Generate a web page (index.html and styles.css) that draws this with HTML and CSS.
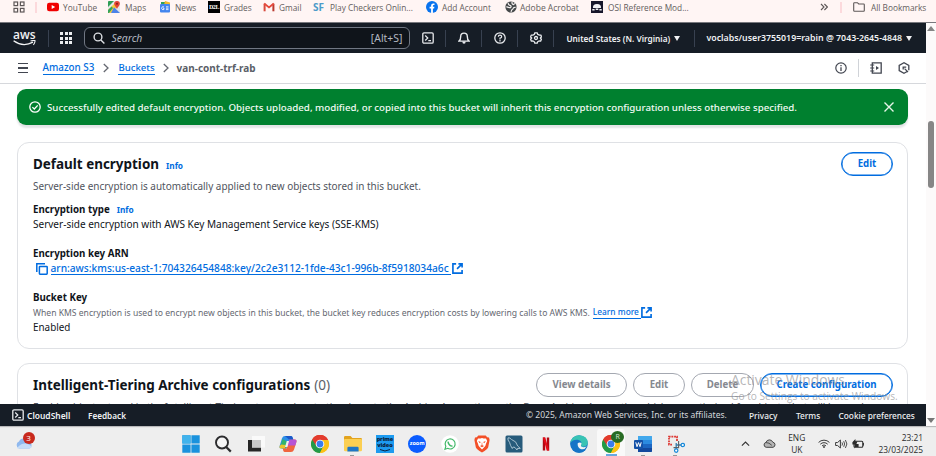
FILE: index.html
```html
<!DOCTYPE html>
<html lang="en">
<head>
<meta charset="utf-8">
<title>Amazon S3</title>
<link rel="stylesheet" href="styles.css">
</head>
<body>
<svg width="0" height="0" class="defs">
  <symbol id="chrome" viewBox="0 0 18 18">
    <circle cx="9" cy="9" r="9" fill="#fbc116"/>
    <path d="M9 9 1.2 4.5A9 9 0 0 1 16.8 4.5Z" fill="#e33b2e"/>
    <path d="M9 9 1.2 4.5A9 9 0 0 0 9 18L12.6 11Z" fill="#229a48"/>
    <path d="M9 5H17.1A9 9 0 0 1 9 18L12.6 11Z" fill="#fbc116"/>
    <path d="M9 5H17.1A9 9 0 0 0 1.2 4.5L5.4 11Z" fill="#e33b2e"/>
    <circle cx="9" cy="9" r="4.3" fill="#fff"/>
    <circle cx="9" cy="9" r="3.4" fill="#3b7ded"/>
  </symbol>
  <symbol id="external" viewBox="0 0 12 12">
    <path d="M4.5 1H1V11H11V7.5M7 1H11V5M11 1 5.5 6.5" fill="none" stroke="#006ce0" stroke-width="1.8"/>
  </symbol>
  <symbol id="shell" viewBox="0 0 12 12">
    <rect x=".8" y=".8" width="10.4" height="10.4" rx="1.2" fill="none" stroke="#e8eaed" stroke-width="1.3"/>
    <path d="M3.2 3.5 5.8 6 3.2 8.5M6.3 8.6H9" fill="none" stroke="#e8eaed" stroke-width="1.2"/>
  </symbol>
</svg>

<div class="bookmarks">
  <svg class="apps" viewBox="0 0 12 12"><g fill="none" stroke="#5d5757" stroke-width="1.2"><rect x="1" y="1" width="3.6" height="3.6"/><rect x="7.4" y="1" width="3.6" height="3.6"/><rect x="1" y="7.4" width="3.6" height="3.6"/><rect x="7.4" y="7.4" width="3.6" height="3.6"/></g></svg>
  <i class="pinkline"></i>
  <div class="bm"><svg viewBox="0 0 12 12"><rect y="1.7" width="12" height="8.6" rx="2.2" fill="#f00000"/><path d="M4.7 4 8.2 6 4.7 8Z" fill="#fff"/></svg>YouTube</div>
  <div class="bm wide"><svg viewBox="0 0 12 12"><rect width="12" height="12" rx="1" fill="#e4e7e9"/><path d="M0 1Q0 0 1 0H6L0 6Z" fill="#2f9e57"/><path d="M0 12V9L8 1 11 4 3 12Z" fill="#f7cb3b"/><path d="M0 9 3.6 5.5 5 7 1 12H0Z" fill="#35a35d"/><path d="M6 6.3 12 12H3Z" fill="#4c83e8"/><path d="M9 0A2.8 2.8 0 0 1 11.8 3C11.8 5 9.4 6 9 8 8.6 6 6.2 5 6.2 3A2.8 2.8 0 0 1 9 0Z" fill="#e34436"/><circle cx="9" cy="2.8" r="1" fill="#8b1a14"/></svg>Maps</div>
  <div class="bm news"><svg viewBox="0 0 12 12"><path d="M2 4V1H6V4Z" fill="#2da058"/><path d="M5 4 6 0 11 1.5V4Z" fill="#f0b92d"/><rect x="1" y="3" width="10" height="8.5" rx="1" fill="#4385ee"/><path d="M5 6A1.5 1.5 0 1 0 5 8.4V7.2H4M7 5.8H9.5M7 7.2H9.5M7 8.6H9.5" fill="none" stroke="#fff" stroke-width=".8"/></svg>News</div>
  <div class="bm grades"><span class="d2l">D2L</span>Grades</div>
  <div class="bm gmail"><svg viewBox="0 0 12 12"><path d="M1.6 10.3V2.7" stroke="#d84b3e" stroke-width="2"/><path d="M10.4 10.3V2.7" stroke="#b83a30" stroke-width="2"/><path d="M1.2 2.6 6 6.4 10.8 2.6" fill="none" stroke="#e5493c" stroke-width="1.9"/></svg>Gmail</div>
  <div class="bm play"><b class="sf">SF</b>Play Checkers Onlin...</div>
  <div class="bm fb"><svg viewBox="0 0 12 12"><circle cx="6" cy="6" r="6" fill="#0873ee"/><path d="M5.1 12V7.6H3.6V5.8H5.1V4.6Q5.1 2.4 7.2 2.4H8.5V4H7.7Q6.9 4 6.9 4.8V5.8H8.4L8.1 7.6H6.9V12Z" fill="#fff"/></svg>Add Account</div>
  <div class="bm acro"><svg viewBox="0 0 12 12"><circle cx="6" cy="6" r="5.6" fill="#45484a"/><path d="M3.2 1.8Q3 4 5 4.4 6.8 5 5.6 6.6 3.6 6.8 1.4 5.6M7.2 1Q6.4 3 8.6 3.6L9.8 2.4M10.6 6.4Q8.4 6 7.8 8 6.4 8.8 6 10.8" fill="none" stroke="#f3efef" stroke-width="1.2"/></svg>Adobe Acrobat</div>
  <div class="bm osi"><svg viewBox="0 0 12 12"><rect width="12" height="12" fill="#17172b"/><path d="M2 7Q1.6 3 6 3T10 7ZM1.3 8H3.6V9.5H1.3ZM4.7 7.5H7.3V9H4.7ZM8.4 8H10.7V9.5H8.4Z" fill="#f0f0f4"/></svg>OSI Reference Mod...</div>
  <svg class="more" viewBox="0 0 8 8"><path d="M1 1 4 4 1 7M4.4 1 7.4 4 4.4 7" fill="none" stroke="#5d5757" stroke-width="1.1"/></svg>
  <i class="pinkline"></i>
  <div class="bm all"><svg viewBox="0 0 12 12"><path d="M.7 2.4Q.7 1.7 1.4 1.7H4.4L5.7 3H10.6Q11.3 3 11.3 3.7V9.6Q11.3 10.3 10.6 10.3H1.4Q.7 10.3 .7 9.6Z" fill="none" stroke="#5d5757" stroke-width="1.1"/></svg>All Bookmarks</div>
</div>

<div class="window">
  <main class="page">
    <header class="nav">
      <div class="aws"><span>aws</span><svg viewBox="0 0 23 6"><path d="M.6 .8Q10 7.6 20 2.2" fill="none" stroke="#f4f5f6" stroke-width="1.4"/><path d="M17.6 .9Q22.8 -.2 22 1.2 21.8 3.4 20.4 4.8" fill="none" stroke="#f4f5f6" stroke-width="1.1"/></svg></div>
      <i class="sep"></i>
      <div class="tiles"><i></i><i></i><i></i><i></i><i></i><i></i><i></i><i></i><i></i></div>
      <div class="search"><svg viewBox="0 0 12 12"><circle cx="5" cy="5" r="3.9" fill="none" stroke="#dcdfe3" stroke-width="1.4"/><path d="M7.9 7.9 11.4 11.4" stroke="#dcdfe3" stroke-width="1.4"/></svg><em>Search</em><span>[Alt+S]</span></div>
      <div class="tool"><svg><use href="#shell"/></svg></div>
      <i class="sep"></i>
      <div class="tool"><svg viewBox="0 0 12 12"><path d="M1 9.1Q2.7 7.6 2.7 4.4A3.3 3.3 0 0 1 9.3 4.4Q9.3 7.6 11 9.1Z" fill="none" stroke="#e8eaed" stroke-width="1.4"/><path d="M4.3 9.5H7.7Q7.7 11.7 6 11.7T4.3 9.5Z" fill="#e8eaed"/></svg></div>
      <i class="sep"></i>
      <div class="tool"><svg viewBox="0 0 12 12"><circle cx="6" cy="6" r="5.2" fill="none" stroke="#e8eaed" stroke-width="1.3"/><path d="M4.3 4.8Q4.3 3.2 6 3.2T7.7 4.7Q7.7 5.7 6 6.2V7.4M6 8.1V9.4" fill="none" stroke="#e8eaed" stroke-width="1.2"/></svg></div>
      <i class="sep"></i>
      <div class="tool"><svg viewBox="0 0 12 12"><path d="M4.8 .8H7.2L7.7 2.4 9.5 3.2 11 3.1 11.4 5 10.3 6 11.4 7.2 10.6 9.2 9 9 7.7 9.7 7.2 11.2H4.8L4.3 9.7 3 9 1.4 9.2 .6 7.2 1.7 6 .6 5 1.2 3.1 2.8 3.2 4.3 2.4Z" fill="none" stroke="#e8eaed" stroke-width="1.3" stroke-linejoin="round"/><circle cx="6" cy="6" r="1.5" fill="none" stroke="#e8eaed" stroke-width="1.3"/></svg></div>
      <i class="sep"></i>
      <div class="region">United States (N. Virginia)<i class="caret"></i></div>
      <i class="sep"></i>
      <div class="account">voclabs/user3755019=rabin @ 7043-2645-4848<i class="caret"></i></div>
    </header>

    <nav class="crumbs">
      <div class="burger"><i></i><i></i><i></i></div>
      <a class="c1">Amazon S3</a>
      <svg class="chev" viewBox="0 0 6 10"><path d="M.8 1 5 5 .8 9" fill="none" stroke="#656871" stroke-width="1.3"/></svg>
      <a class="c2">Buckets</a>
      <svg class="chev" viewBox="0 0 6 10"><path d="M.8 1 5 5 .8 9" fill="none" stroke="#656871" stroke-width="1.3"/></svg>
      <span class="c3">van-cont-trf-rab</span>
      <div class="panel-tools">
        <svg viewBox="0 0 12 12"><circle cx="6" cy="6" r="5.2" fill="none" stroke="#424650" stroke-width="1.2"/><path d="M6 5.2V9M6 3V4.3" stroke="#424650" stroke-width="1.3"/></svg>
        <i></i>
        <svg viewBox="0 0 12 12"><path d="M2.3 .8H11.2V11.2H2.3Z" fill="none" stroke="#424650" stroke-width="1.3"/><path d="M.2 3H4.2M.2 6H4.2M.2 9H4.2" stroke="#424650" stroke-width="1.2"/><path d="M6 4 9 6 6 8Z" fill="#424650"/></svg>
        <svg viewBox="0 0 12 12"><path d="M9.2 9.5 6 11.2 1.2 8.6V3.4L6 .8 10.8 3.4V8.2" fill="none" stroke="#424650" stroke-width="1.3"/><path d="M10 10 6.6 6.6" stroke="#424650" stroke-width="1.2"/><path d="M5.2 7.6V5.2H8.2" fill="none" stroke="#424650" stroke-width="1.3"/></svg>
      </div>
    </nav>

    <div class="content">
      <div class="flash">
        <svg viewBox="0 0 12 12"><circle cx="6" cy="6" r="5.2" fill="none" stroke="#fff" stroke-width="1.3"/><path d="M3.4 6.1 5.3 8 8.7 4.4" fill="none" stroke="#fff" stroke-width="1.3"/></svg>
        <span>Successfully edited default encryption. Objects uploaded, modified, or copied into this bucket will inherit this encryption configuration unless otherwise specified.</span>
        <svg class="close" viewBox="0 0 12 12"><path d="M1.5 1.5 10.5 10.5M10.5 1.5 1.5 10.5" stroke="#e6f5e9" stroke-width="1.4"/></svg>
      </div>

      <section class="card encryption">
        <div class="head"><h2>Default encryption</h2><a class="info">Info</a><button class="btn primary">Edit</button></div>
        <p class="desc">Server-side encryption is automatically applied to new objects stored in this bucket.</p>
        <div class="label type">Encryption type<a class="info">Info</a></div>
        <div class="value sse">Server-side encryption with AWS Key Management Service keys (SSE-KMS)</div>
        <div class="label gap">Encryption key ARN</div>
        <div class="value arn"><svg viewBox="0 0 12 12"><path d="M.8 9V.8H9" fill="none" stroke="#006ce0" stroke-width="1.5"/><rect x="3.4" y="3.4" width="7.8" height="7.8" rx=".6" fill="none" stroke="#006ce0" stroke-width="1.5"/></svg><a>arn:aws:kms:us-east-1:704326454848:key/2c2e3112-1fde-43c1-996b-8f5918034a6c</a><svg viewBox="0 0 12 12"><use href="#external"/></svg></div>
        <div class="label gap">Bucket Key</div>
        <div class="hint"><span>When KMS encryption is used to encrypt new objects in this bucket, the bucket key reduces encryption costs by lowering calls to AWS KMS.</span><a>Learn more</a><svg viewBox="0 0 12 12"><use href="#external"/></svg></div>
        <div class="value enabled">Enabled</div>
      </section>

      <section class="card tiering">
        <div class="head"><h2>Intelligent-Tiering Archive configurations</h2><span class="count">(0)</span>
          <div class="actions"><button class="btn view">View details</button><button class="btn edit">Edit</button><button class="btn del">Delete</button><button class="btn primary create">Create configuration</button></div>
        </div>
        <p class="desc">Enable objects stored in the Intelligent-Tiering storage class to tier-down to the Archive Access tier or the Deep Archive Access tier which are optimized for objects that will be rarely</p>
      </section>
    </div>

    <footer class="footer">
      <svg><use href="#shell"/></svg><b class="cs">CloudShell</b><b class="fbk">Feedback</b>
      <span class="copy">© 2025, Amazon Web Services, Inc. or its affiliates.</span>
      <span class="f1">Privacy</span><span class="f2">Terms</span><span class="f3">Cookie preferences</span>
    </footer>
  </main>
  <aside class="scroll"><i class="up"></i><i class="thumb"></i><i class="down"></i></aside>
</div>

<div class="taskbar">
  <div class="weather"><svg viewBox="0 0 18 12"><path d="M4 11.5A3.7 3.7 0 0 1 4 4.6 5 5 0 0 1 13.4 4.8 3.5 3.5 0 0 1 14.5 11.5Z" fill="#8fb8ee"/><path d="M2 11Q9 3 17 9.6 16 11.5 14.5 11.5H4Q2.8 11.5 2 11Z" fill="#c4dcf8"/></svg><span>3</span></div>
  <div class="apps-row">
    <div><svg viewBox="0 0 18 18"><path d="M.3 .3H8.6V8.6H.3ZM9.4 .3H17.7V8.6H9.4ZM.3 9.4H8.6V17.7H.3ZM9.4 9.4H17.7V17.7H9.4Z" fill="#1a92dd"/><path d="M.3 .3H8.6V8.6H.3Z" fill="#41b3ec"/></svg></div>
    <div><svg viewBox="0 0 18 18"><circle cx="8" cy="7.5" r="6" fill="#f6f6f6" stroke="#2c2c2e" stroke-width="1.9"/><path d="M12.2 12 16.8 16.6" stroke="#2c2c2e" stroke-width="2.2"/></svg></div>
    <div><svg viewBox="0 0 18 18"><rect x="5" y="1" width="13" height="11.5" fill="#fafafa"/><path d="M1 5H5V12.5H14V16.5H1Z" fill="#262626"/><rect x="5" y="5" width="9" height="7.5" fill="#c9c9c9"/></svg></div>
    <div><svg viewBox="0 0 18 18"><path d="M6 1H12Q13.3 1 13.8 3L14.3 4.5H10.5L7.4 13.5H2.2Q0 13.5 .6 11L3 3.2Q3.8 1 6 1Z" fill="#2d8fe8"/><path d="M3.4 4 2 9.5Q1 13 3.5 13.5H7L9 7Z" fill="#33b46c"/><path d="M2 9.5 .6 11Q0 13.5 2.2 13.5H6L6.8 10Z" fill="#e9c52c"/><path d="M12 17H6Q4.6 17 4.2 15.5L3.8 13.5H7.5L10.5 4.5H15.8Q18 4.5 17.4 7L15 14.8Q14.2 17 12 17Z" fill="#f0653f"/><path d="M10.5 4.5H15.8Q18 4.5 17.4 7L16.3 10.5H8.6Z" fill="#b653d6"/><path d="M6 1H12Q13.3 1 13.8 3L14.3 4.5H10Z" fill="#1b58c9"/><path d="M7.8 6H10L8.4 12H6Z" fill="#f1efee"/></svg></div>
    <div><svg><use href="#chrome"/></svg></div>
    <div class="run"><svg viewBox="0 0 18 18"><path d="M0 2.2Q0 1 1.2 1H6.6L8.4 3H16.8Q18 3 18 4.2V7H0Z" fill="#e2a31e"/><path d="M0 5Q0 4 1 4H17Q18 4 18 5V15Q18 16.2 16.8 16.2H1.2Q0 16.2 0 15Z" fill="#fbcf52"/><path d="M3.4 16.5V13Q3.4 11.8 4.6 11.8H13.4Q14.6 11.8 14.6 13V16.5Z" fill="#1e76c6"/></svg></div>
    <div><span class="prime">prime<br>video<svg viewBox="0 0 12 3"><path d="M1 .5Q6 3.5 11 .5" fill="none" stroke="#0b2340" stroke-width="1"/></svg></span></div>
    <div><span class="zoomapp">zoom</span></div>
    <div><svg viewBox="0 0 18 18"><circle cx="9" cy="9" r="8.8" fill="#fff"/><path d="M4 14.2 4.8 11.4A5 5 0 1 1 6.7 13.3Z" fill="none" stroke="#43b96a" stroke-width="1.2"/><path d="M7 6.6Q7.2 9 9 10.3T11.4 10.6" fill="none" stroke="#43b96a" stroke-width="1.5"/></svg></div>
    <div><svg viewBox="0 0 18 18"><path d="M5.3 .5H12.7L14.2 2.2 16 2.4 16.6 5 15.2 12.2Q14.8 13.8 9 17.6 3.2 13.8 2.8 12.2L1.4 5 2 2.4 3.8 2.2Z" fill="#f34f27"/><path d="M5 3.5H7.5L9 3 10.5 3.5H13L14.2 6 13.2 8.3 12.3 11 9 14.4 5.7 11 4.8 8.3 3.8 6Z" fill="#fff"/><path d="M5.2 6 7.8 6.9 6.8 8.2ZM12.8 6 10.2 6.9 11.2 8.2ZM9 7 9.5 9.8H8.5ZM7 11 9 10 11 11 9 12.2Z" fill="#f34f27"/></svg></div>
    <div><svg viewBox="0 0 18 18"><rect x=".5" y=".5" width="17" height="17" rx="1.5" fill="#275b7b"/><path d="M3 2.8Q5 2.5 6.5 4.5 11.5 6 12.7 11L15.3 13.4 12.4 13.5 12 15 10 12.5 8.2 12 7.3 13.5 5.6 10.5Q4.8 7 3 5Z" fill="none" stroke="#b3cbd8" stroke-width=".9"/></svg></div>
    <div><svg viewBox="0 0 18 18"><path d="M5.8 2.5H8.2V15.5H5.8ZM9.8 2.5H12.2V15.5H9.8Z" fill="#b20812"/><path d="M5.8 2.5H8.2L12.2 15.5H9.8Z" fill="#e50b18"/></svg></div>
    <div><svg viewBox="0 0 18 18"><circle cx="9" cy="9" r="8.8" fill="#1878c8"/><path d="M.4 8Q1.8 .2 9.4 .2 17.8 .8 17.8 8 17.2 11.8 12.4 11.8 10.4 11.6 11.2 10 12 6.2 7.6 5.2 3 5 .4 8Z" fill="#38c3b4"/><path d="M.4 8Q3 4.2 7.8 4.8 10.6 5.2 11.5 7.6 7 6 6.2 9.8 6 15 12.6 15.2L15.6 14.8Q13 18 9 17.8 1 17 .4 8Z" fill="#1574c7"/><path d="M7.8 8Q10.4 6.6 11.6 8.6 11.5 9.4 11 10 10.2 11.6 12.4 12.1 15 12.4 16.8 11.2 14.4 15.4 10.6 14 7 12.2 7.8 8Z" fill="#f0f3f5"/></svg></div>
    <div class="active"><svg><use href="#chrome"/></svg><span class="rbadge">R</span></div>
    <div class="run"><svg viewBox="0 0 18 18"><rect x="4" y="1" width="14" height="16" rx="1.2" fill="#2b8be0"/><path d="M4 1H17Q18 1 18 2V5H4Z" fill="#42a8ec"/><path d="M4 9H18V13H4Z" fill="#1b66c2"/><path d="M4 13H18V16Q18 17 17 17H4Z" fill="#12489d"/><rect y="5" width="9" height="9" rx="1" fill="#1452a8"/><path d="M1.8 7.3 3 11.7 4.5 7.6 6 11.7 7.2 7.3" fill="none" stroke="#fff" stroke-width="1"/></svg></div>
    <div class="run"><svg viewBox="0 0 18 18"><path d="M10 6V1.6H2V9.6H5" fill="none" stroke="#dd3a35" stroke-width="1.8" stroke-dasharray="1.9 .8"/><path d="M9.2 8V14M9.2 10H14.2" stroke="#3b7fae" stroke-width="1.3"/><path d="M11.6 6V12.6H6.5" fill="none" stroke="#5b6165" stroke-width="1.1"/><circle cx="9.2" cy="15.6" r="1.7" fill="#fff" stroke="#1689d9" stroke-width="1.2"/><circle cx="15.8" cy="10" r="1.7" fill="#fff" stroke="#1689d9" stroke-width="1.2"/></svg></div>
  </div>
  <div class="tray">
    <svg class="t1" viewBox="0 0 10 6"><path d="M1 5 5 1.2 9 5" fill="none" stroke="#333" stroke-width="1.3"/></svg>
    <svg class="t2" viewBox="0 0 13 9"><path d="M3.2 8.3A2.5 2.5 0 0 1 3 3.4 3.6 3.6 0 0 1 9.8 3.2 2.6 2.6 0 0 1 10 8.3Z" fill="#b5b5b5" stroke="#444" stroke-width="1"/><path d="M3 3.6Q6 3.4 8.8 6.3" fill="none" stroke="#444" stroke-width=".9"/></svg>
    <div class="lang">ENG<br>UK</div>
    <svg class="t3" viewBox="0 0 12 9"><path d="M.6 3.4A7.6 7.6 0 0 1 11.4 3.4M2.3 5.2A5.2 5.2 0 0 1 9.7 5.2M4 6.9A2.8 2.8 0 0 1 8 6.9" fill="none" stroke="#3c3c3c" stroke-width="1"/><circle cx="6" cy="8" r=".9" fill="#333"/></svg>
    <svg class="t4" viewBox="0 0 13 10"><path d="M.6 3.5H2.6L5.4 1V9L2.6 6.5H.6Z" fill="none" stroke="#3c3c3c" stroke-width="1"/><path d="M7 3.4Q8 5 7 6.6M8.7 2.2Q10.5 5 8.7 7.8M10.4 1Q13.4 5 10.4 9" fill="none" stroke="#3c3c3c" stroke-width=".9"/></svg>
    <svg class="t5" viewBox="0 0 12 10"><rect x="2" y="2.2" width="8.8" height="6" rx="1" fill="none" stroke="#2c2c2c" stroke-width="1.1"/><path d="M11.4 4V6.6" stroke="#2c2c2c" stroke-width="1"/><path d="M.4 3.2 3.4 0V2.5H5.4L2.6 9.8V5.5H.4Z" fill="#2c2c2c"/><rect x="3" y="5" width="3.6" height="3" fill="#2c2c2c"/></svg>
    <div class="clock">23:21<br>23/03/2025</div>
  </div>
</div>
<div class="watermark"><div>Activate Windows</div><p>Go to Settings to activate Windows.</p></div>
</body>
</html>
```
FILE: styles.css
```css
* { box-sizing: border-box; }
body { margin: 0; width: 936px; height: 456px; overflow: hidden; background: #fff; font-family: "Noto Sans", sans-serif; display: flex; flex-direction: column; position: relative; color: #0f141a; white-space: nowrap; }
svg { display: block; flex: none; }
h2, p { margin: 0; }
i { display: block; flex: none; }
.defs { position: absolute; }

.bookmarks { height: 23px; background: #fff5f4; border-bottom: 1px solid #77777c; display: flex; align-items: flex-start; padding: 1px 0 0 13px; font: 8.3px/13px "Open Sans", sans-serif; color: #645d5d; flex: none; }
.bookmarks .apps { width: 12px; height: 12px; margin-right: 10px; }
.pinkline { width: 2px; height: 11px; background: #fcd9dc; margin-top: 1px; }
.bm { display: flex; gap: 4px; width: 61px; flex: none; }
.bm svg { width: 12px; height: 12px; }
.pinkline + .bm { margin-left: 10px; }
.bm.wide { width: 51px; gap: 5px; }
.bm.news { width: 49px; }
.bm.grades { width: 55px; }
.d2l { width: 12px; height: 12px; background: #000; color: #fff; font: bold 6px/12px "Liberation Serif", serif; text-align: center; letter-spacing: -.4px; }
.bm.gmail { width: 50px; }
.bm.play { width: 113px; gap: 4px; }
.sf { color: #4c9bc9; font: 700 10px/13px "Open Sans", sans-serif; width: 13px; }
.bm.fb { width: 79px; }
.bm.acro { width: 86px; gap: 3px; font-size: 8.5px; }
.bm.osi { width: 229px; gap: 5px; }
.more { width: 8px; height: 8px; margin: 2px 12px 0 0; }
.bm.all { width: 76px; gap: 6px; }
.bm.all svg { margin-left: 1px; }

.window { display: flex; height: 404px; flex: none; border-bottom: 1px solid #b9b9bb; }
.page { width: 926px; display: flex; flex-direction: column; flex: none; }
.scroll { width: 10px; background: #fcfafa; display: flex; flex-direction: column; align-items: center; padding-top: 3px; }
.up { border: 4px solid transparent; border-top: 0; border-bottom: 5px solid #858585; }
.thumb { width: 6px; height: 67px; border-radius: 3px; background: #868686; margin-top: 90px; }
.down { border: 4px solid transparent; border-bottom: 0; border-top: 5px solid #777; margin-top: 230px; }

.nav { height: 30px; background: #161d26; display: flex; align-items: center; color: #f0f1f3; flex: none; padding-left: 13px; }
.aws { width: 35px; }
.aws span { display: block; font: 600 12px/9px "Open Sans", sans-serif; width: 22px; }
.aws svg { width: 23px; height: 6px; margin-top: 1px; }
.sep { width: 1px; height: 17px; background: #384150; }
.tiles { display: grid; grid-template-columns: repeat(3, 3px); gap: 1.7px; width: 12.4px; margin: 0 12px 0 11px; }
.tiles i { height: 3px; background: #eceef0; }
.search { width: 326px; height: 22px; border: 1px solid #707783; border-radius: 6px; background: #0f141a; display: flex; align-items: center; padding: 0 7px 0 8px; color: #b4b9c1; font-size: 10.4px; }
.search svg { width: 12px; height: 12px; margin-right: 6px; }
.search em { flex: 1; }
.tool { width: 35px; display: flex; justify-content: center; }
.tool svg, .footer svg { width: 12px; height: 12px; }
.region, .account { font-weight: 600; display: flex; align-items: center; }
.region { font-size: 8.28px; width: 140px; padding-left: 12px; }
.account { font-size: 8.81px; padding-left: 11px; }
.caret { border: 3.2px solid transparent; border-bottom: 0; border-top: 5px solid #f0f1f3; margin-left: 4px; }

.crumbs { height: 31px; border-bottom: 1px solid #d6d8dc; display: flex; align-items: center; padding-left: 18px; font-size: 9.85px; line-height: 13px; flex: none; }
.burger { width: 10px; display: grid; gap: 3px; margin-right: 14.5px; }
.burger i { height: 1.3px; background: #424650; }
a { color: #006ce0; }
.crumbs a { border-bottom: 1px solid #006ce0; font-weight: 500; }
.c2 { font-size: 9.6px; }
.chev { width: 6px; height: 10px; margin: 0 9px; }
.c3 { font-size: 9.96px; font-weight: 700; color: #5b5f68; }
.c2 + .chev { margin: 0 8px; }
.panel-tools { margin-left: auto; display: flex; align-items: center; padding-right: 16px; }
.panel-tools svg { width: 12px; height: 12px; }
.panel-tools i { width: 1px; height: 18px; background: #d0d3d8; margin: 0 11px; }
.panel-tools i + svg { margin-right: 16px; }

.content { flex: 1; overflow: hidden; padding: 5px 18px 0 17px; min-height: 0; }
.flash { height: 36px; border-radius: 9px; background: #00802f; color: #f2faf4; display: flex; align-items: center; padding: 0 13px 0 12px; font-size: 9.73px; font-weight: 500; box-shadow: 0 3px 2px #e2e4e6; }
.flash svg { width: 12px; height: 12px; margin-right: 6px; }
.flash .close { margin: 0 0 0 auto; }
.card { border: 1px solid #dfe1e5; border-radius: 12px; padding: 9px 14px 0 15px; }
.encryption { margin-top: 17px; height: 207px; }
.tiering { margin-top: 14px; height: 200px; }
.head { height: 24px; display: flex; align-items: center; }
h2 { font-size: 13.44px; font-weight: 700; line-height: 20px; }
.info { font-size: 8.29px; font-weight: 700; margin-left: 7px; }
.head .info { padding-top: 3px; }
.btn { font: 700 9.68px/20px "Noto Sans", sans-serif; height: 24px; border: 1.5px solid #a4a8b1; border-radius: 12px; background: none; color: #85888f; padding: 0; text-align: center; }
.btn.primary { border-color: #006ce0; color: #006ce0; box-shadow: inset 0 0 0 .5px #006ce0; }
.head > .btn { margin-left: auto; width: 52px; }
.desc { font-size: 9.95px; line-height: 16px; margin-top: 2px; color: #50545d; }
.label { font-weight: 700; font-size: 9.74px; line-height: 15px; height: 15px; }
.label.type { margin-top: 8px; }
.label.gap { margin-top: 14px; }
.label + .value { font-size: 10.03px; }
.value { font-size: 9.9px; line-height: 15px; height: 15px; }
.enabled { line-height: 14px; }
.label + .arn { display: flex; align-items: center; font-size: 10.2px; padding-left: 3px; font-weight: 500; }
.arn a, .hint a { line-height: 12px; border-bottom: 1px solid #006ce0; padding-right: 2px; }
.arn svg { width: 12px; height: 12px; margin-right: 2.5px; }
.arn a + svg { width: 11px; height: 11px; margin-left: 1px; }
.hint { display: flex; align-items: center; height: 15px; font-size: 8.6px; color: #656871; }
.hint a { font-size: 8.33px; font-weight: 500; margin-left: 3px; }
.hint svg { width: 11px; height: 11px; }
.count { font-size: 13.6px; color: #5b5f68; margin-left: 4px; line-height: 20px; }
.actions { display: flex; margin-left: auto; gap: 6px; }
.view { width: 91px; }
.edit { width: 52px; }
.del { width: 63px; }
.create { width: 133px; }

.footer { height: 22px; background: #161d26; color: #f0f1f3; display: flex; align-items: center; font-size: 8.45px; padding-left: 12px; flex: none; }
.footer b { font-weight: 600; }
.cs { margin-left: 3px; width: 61px; }
.fbk { font-size: 8.2px; width: 438px; }
.copy { width: 223px; font-size: 8.54px; color: #d5d8dc; }
.f1, .f2, .f3 { font-weight: 500; font-size: 8.3px; }
.f1 { width: 47px; }
.f2 { width: 42.5px; }

.taskbar { flex: 1; background: #eeeeee; display: flex; font-family: "Open Sans", sans-serif; border-top: 1px solid #e6e6e6; }
.weather { width: 175px; padding: 8px 0 0 15px; position: relative; }
.weather svg { width: 18px; height: 12px; margin-top: 1px; }
.weather span { position: absolute; left: 22.5px; top: 3.5px; width: 12px; height: 12px; border-radius: 50%; background: #c8291d; color: #fff; font-size: 8px; line-height: 11.5px; text-align: center; }
.apps-row { display: grid; grid-template-columns: repeat(16, 32.3px); }
.apps-row > div { display: flex; justify-content: center; padding-top: 7px; position: relative; }
.apps-row svg { width: 18px; height: 18px; }
.run::after { content: ""; position: absolute; bottom: 0; left: 14px; width: 4px; height: 1px; background: #999; }
.active { background: #f9f9f9; border-radius: 3px 3px 0 0; margin: 1px 2px 0; padding-top: 6px !important; }
.active::after { content: ""; position: absolute; bottom: 0; left: 9px; width: 11px; height: 2px; background: #67a9e2; }
.rbadge { position: absolute; right: 1px; top: 2px; width: 13px; height: 12px; border-radius: 50%; background: #286b24; color: #dcebd9; font-size: 7px; line-height: 12px; text-align: center; }
.prime { width: 18px; height: 18px; background: #1d9bf0; color: #0b2340; font: 800 5.6px/5.5px "Open Sans", sans-serif; text-align: center; padding-top: 2px; letter-spacing: -.1px; }
.apps-row .prime svg { width: 12px; height: 3px; margin: 1px auto 0; }
.zoomapp { width: 18px; height: 18px; border-radius: 50%; background: #0b5cff; color: #fff; font: 700 5.5px/17px "Open Sans", sans-serif; text-align: center; }
.tray { flex: 1; display: flex; align-items: center; color: #2b2b2b; font-size: 8.4px; line-height: 11.3px; padding: 3px 13px 0 49px; }
.t1 { width: 9px; height: 5.5px; margin-right: 13px; }
.t2 { width: 13px; height: 9px; }
.lang { width: 18px; margin: 0 12.5px 0 12px; text-align: center; }
.t3 { width: 12px; height: 9px; margin-right: 5px; }
.t4 { width: 13px; height: 10px; margin-right: 4px; }
.t5 { width: 12px; height: 10px; }
.clock { margin-left: auto; text-align: right; }

.watermark { position: absolute; left: 731px; top: 371px; font-family: "Open Sans", sans-serif; color: rgba(135, 135, 138, .62); }
.watermark div { font-size: 13.89px; line-height: 18px; }
.watermark p { font-size: 10.19px; line-height: 14px; }
```
